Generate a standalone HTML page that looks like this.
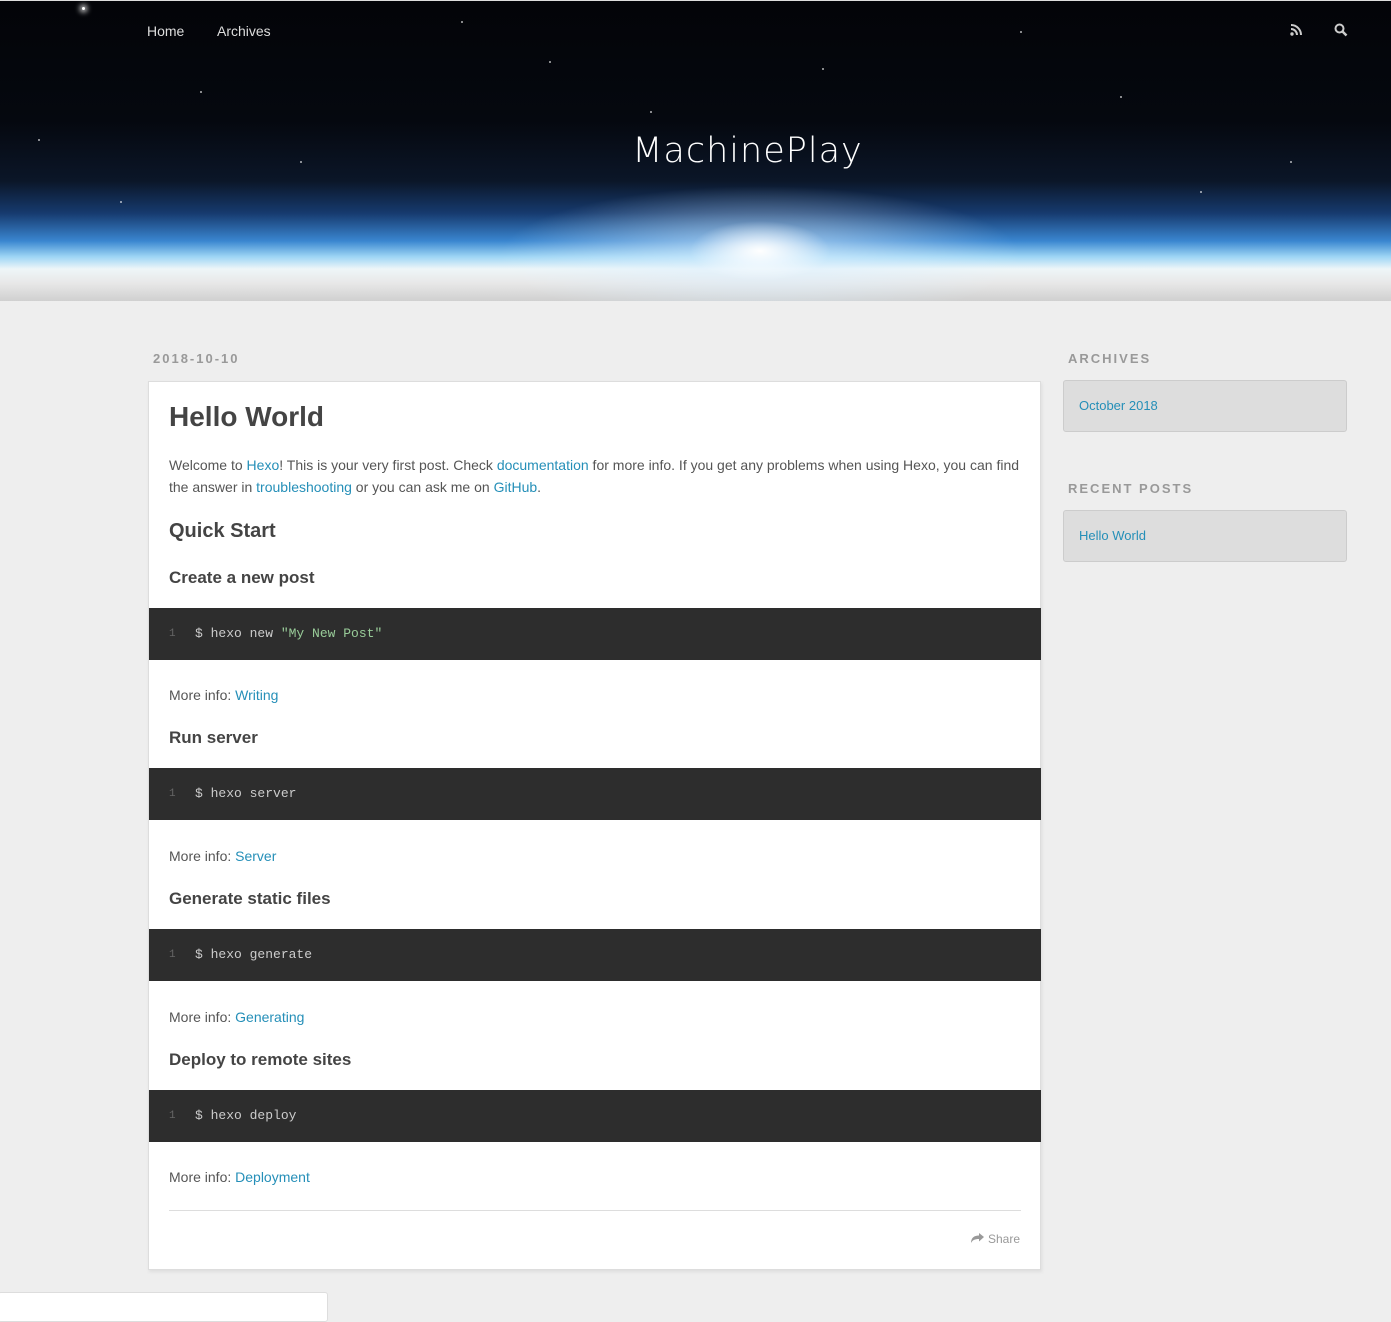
<!DOCTYPE html>
<html><head><meta charset="utf-8"><style>
*{margin:0;padding:0;box-sizing:border-box}
body{width:1391px;height:1312px;background:#eee;font-family:"Liberation Sans",sans-serif;color:#555;position:relative;overflow:hidden}
#hdr{position:absolute;left:0;top:0;width:1391px;height:301px;border-top:1px solid #ddd;
background:
radial-gradient(ellipse 70px 30px at 760px 250px,rgba(255,255,255,1),rgba(255,255,255,0) 100%),
radial-gradient(ellipse 260px 70px at 760px 255px,rgba(220,240,255,.7),rgba(120,170,230,0) 100%),
linear-gradient(to bottom,#030408 0px,#05080f 120px,#0b1628 180px,#163a6e 212px,#3a86d0 240px,#9fd6f5 256px,#eef6f8 268px,#e8e8e8 282px,#d0d0d0 300px);overflow:hidden}
.s{position:absolute;background:#fff;border-radius:50%;width:2px;height:2px;opacity:.7}
#nav a{position:absolute;top:22px;color:#ddd;font-size:14px;text-decoration:none}
#title{position:absolute;top:130px;left:0;width:1495px;text-align:center;color:#fff;font-family:"DejaVu Sans",sans-serif;font-size:35px;font-weight:200;letter-spacing:1px}
a{color:#258fb8;text-decoration:none}
.date{position:absolute;left:153px;top:351px;font-size:13px;font-weight:bold;letter-spacing:2px;color:#999}
#art{position:absolute;left:148px;top:381px;width:893px;height:889px;background:#fff;box-shadow:1px 2px 3px #ddd;border:1px solid #ddd}
.ab{position:absolute;left:20px;font-size:14px;line-height:22px;color:#555}
.code{position:absolute;left:0;width:892px;height:52px;background:#2d2d2d;font-family:"Liberation Mono",monospace;font-size:13px;color:#ccc;line-height:52px}
.code .n{position:absolute;left:20px;color:#666;font-size:11px}
.code .c{position:absolute;left:46px}
.g{color:#99cc99}
h1.ab{font-size:28px;font-weight:bold;color:#444;line-height:34px}
h2.ab{font-size:20px;font-weight:bold;color:#444}
h3.ab{font-size:17px;font-weight:bold;color:#444}
.wt{position:absolute;left:1068px;font-size:13px;font-weight:bold;letter-spacing:2px;color:#999}
.wb{position:absolute;left:1063px;width:284px;height:52px;background:#ddd;border:1px solid #ccc;border-radius:3px;font-size:13px;line-height:50px;padding-left:15px}
</style></head><body>
<div id="hdr">
<div class="s" style="left:82px;top:6px;width:3px;height:3px;opacity:1;box-shadow:0 0 6px 2px #fff"></div>
<div class="s" style="left:549px;top:60px"></div><div class="s" style="left:461px;top:20px"></div>
<div class="s" style="left:822px;top:67px"></div><div class="s" style="left:38px;top:138px"></div>
<div class="s" style="left:1120px;top:95px"></div><div class="s" style="left:300px;top:160px"></div>
<div class="s" style="left:1290px;top:160px"></div><div class="s" style="left:1020px;top:30px"></div>
<div class="s" style="left:200px;top:90px"></div><div class="s" style="left:650px;top:110px"></div>
<div class="s" style="left:1200px;top:190px"></div><div class="s" style="left:120px;top:200px"></div>
<div id="nav"><a style="left:147px">Home</a><a style="left:217px">Archives</a></div>
<svg style="position:absolute;left:1290px;top:22px" width="13" height="13" viewBox="0 0 13 13"><circle cx="2" cy="11" r="1.7" fill="#ccc"/><path d="M1 6a6 6 0 0 1 6 6M1 2a10 10 0 0 1 10 10" stroke="#ccc" stroke-width="2" fill="none"/></svg>
<svg style="position:absolute;left:1334px;top:22px" width="14" height="14" viewBox="0 0 14 14"><circle cx="5.5" cy="5.5" r="4" stroke="#ccc" stroke-width="2" fill="none"/><path d="M8.5 8.5l4 4" stroke="#ccc" stroke-width="2.5"/></svg>
<div id="title">MachinePlay</div>
</div>
<div class="date">2018-10-10</div>
<div id="art">
<h1 class="ab" style="top:18px">Hello World</h1>
<p class="ab" style="top:72px;width:855px">Welcome to <a>Hexo</a>! This is your very first post. Check <a>documentation</a> for more info. If you get any problems when using Hexo, you can find the answer in <a>troubleshooting</a> or you can ask me on <a>GitHub</a>.</p>
<h2 class="ab" style="top:138px">Quick Start</h2>
<h3 class="ab" style="top:185px">Create a new post</h3>
<div class="code" style="top:226px"><span class="n">1</span><span class="c">$ hexo new <span class="g">"My New Post"</span></span></div>
<p class="ab" style="top:302px">More info: <a>Writing</a></p>
<h3 class="ab" style="top:345px">Run server</h3>
<div class="code" style="top:386px"><span class="n">1</span><span class="c">$ hexo server</span></div>
<p class="ab" style="top:463px">More info: <a>Server</a></p>
<h3 class="ab" style="top:506px">Generate static files</h3>
<div class="code" style="top:547px"><span class="n">1</span><span class="c">$ hexo generate</span></div>
<p class="ab" style="top:624px">More info: <a>Generating</a></p>
<h3 class="ab" style="top:667px">Deploy to remote sites</h3>
<div class="code" style="top:708px"><span class="n">1</span><span class="c">$ hexo deploy</span></div>
<p class="ab" style="top:784px">More info: <a>Deployment</a></p>
<div style="position:absolute;left:20px;top:828px;width:852px;border-top:1px solid #ddd"></div>
<div style="position:absolute;right:20px;top:850px;font-size:12px;color:#999"><svg width="13" height="11" viewBox="0 0 13 11" style="vertical-align:-1px;margin-right:4px"><path d="M13 4L8 0v2.5C3 2.5 0 5 0 10c1.5-3 4-4 8-4v2.5z" fill="#999"/></svg>Share</div>
</div>
<div class="wt" style="top:351px">ARCHIVES</div>
<div class="wb" style="top:380px"><a>October 2018</a></div>
<div class="wt" style="top:481px">RECENT POSTS</div>
<div class="wb" style="top:510px"><a>Hello World</a></div>
<div style="position:absolute;left:-2px;top:1292px;width:330px;height:30px;background:#fff;border:1px solid #ddd;border-radius:3px"></div>
</body></html>
